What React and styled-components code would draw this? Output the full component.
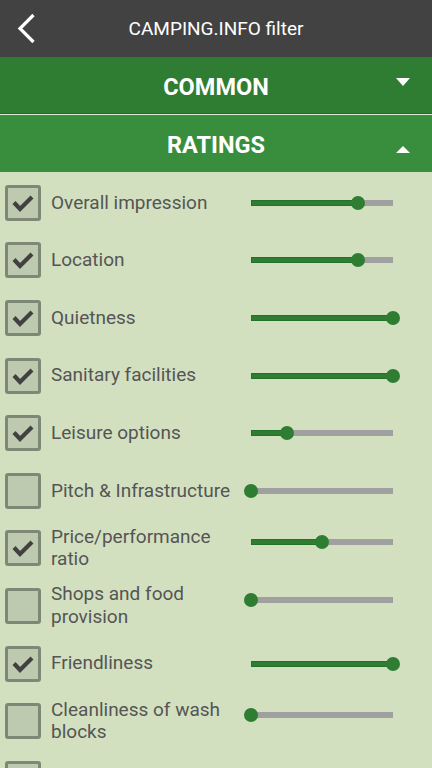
import React from "react";
import styled, { createGlobalStyle } from "styled-components";

const Global = createGlobalStyle`
  html, body { margin: 0; padding: 0; }
  body {
    width: 432px;
    height: 768px;
    overflow: hidden;
    background: #d2e0c0;
    font-family: Roboto, "Noto Sans", "Liberation Sans", sans-serif;
  }
`;

const Screen = styled.div`
  width: 432px;
  height: 768px;
  display: flex;
  flex-direction: column;
  background: #d2e0c0;
  overflow: hidden;
`;

const TopBar = styled.header`
  height: 57px;
  flex: none;
  background: #424242;
  display: grid;
  grid-template-columns: 57px 1fr 57px;
  align-items: center;
`;

const BackButton = styled.button`
  border: 0;
  background: transparent;
  padding: 0 0 0 16px;
  height: 57px;
  display: flex;
  align-items: center;
`;

const Title = styled.h1`
  margin: 0;
  color: #ffffff;
  font-size: 19px;
  font-weight: 400;
  text-align: center;
`;

const Section = styled.div`
  height: ${(p) => p.$h}px;
  flex: none;
  background: ${(p) => p.$bg};
  border-bottom: ${(p) => (p.$divider ? "1px solid #1f6a24" : "none")};
  box-shadow: ${(p) => (p.$divider ? "0 1px 0 #d8ead8" : "none")};
  margin-bottom: ${(p) => (p.$divider ? "1px" : "0")};
  display: grid;
  grid-template-columns: 60px 1fr 60px;
  align-items: center;
`;

const SectionTitle = styled.span`
  grid-column: 2;
  text-align: center;
  color: #ffffff;
  font-size: 23.5px;
  font-weight: 700;
  padding-top: ${(p) => p.$pt}px;
`;

const Caret = styled.span`
  grid-column: 3;
  justify-self: start;
  margin-left: 24px;
  width: 0;
  height: 0;
  border-left: 7px solid transparent;
  border-right: 7px solid transparent;
  ${(p) =>
    p.$up
      ? "border-bottom: 7px solid #fff; margin-top: 11px;"
      : "border-top: 8px solid #fff; margin-top: -7px;"}
`;

const List = styled.div`
  padding-top: 2px;
  display: flex;
  flex-direction: column;
`;

const Row = styled.div`
  height: 57.6px;
  flex: none;
  display: flex;
  align-items: center;
  padding: 0 32px 0 5px;
  box-sizing: border-box;
`;

const Box = styled.div`
  width: 36px;
  height: 36px;
  flex: none;
  box-sizing: border-box;
  border: 3px solid #7e8876;
  border-radius: 3px;
  background: #bdcab0;
  display: flex;
  align-items: center;
  justify-content: center;
`;

const Label = styled.div`
  flex: 1;
  margin-left: 10px;
  color: #555555;
  font-size: 19px;
  line-height: 22.5px;
`;

const SliderWrap = styled.div`
  width: 156px;
  height: 14px;
  flex: none;
  position: relative;
  margin-bottom: ${(p) => (p.$twoLine ? "12px" : "0")};
`;

const Track = styled.div`
  position: absolute;
  left: 7px;
  right: 7px;
  top: 4px;
  height: 6px;
  background: #a0a0a0;
`;

const Fill = styled.div`
  position: absolute;
  left: 0;
  top: 0;
  bottom: 0;
  background: #2e7d32;
  box-shadow: inset 0 0 0 1px #25712a;
`;

const Thumb = styled.div`
  position: absolute;
  top: 0;
  width: 14px;
  height: 14px;
  border-radius: 50%;
  background: #2e7d32;
`;

const Check = () => (
  <svg width="24" height="20" viewBox="0 0 24 20">
    <path d="M3 9.5 L9 16 L21 4" fill="none" stroke="#414141" strokeWidth="4.2" strokeLinejoin="miter" />
  </svg>
);

const Slider = ({ value, max = 4, twoLine }) => {
  const pct = (value / max) * 100;
  return (
    <SliderWrap $twoLine={twoLine}>
      <Track>
        <Fill style={{ width: `${pct}%` }} />
      </Track>
      <Thumb style={{ left: `${(value / max) * 142}px` }} />
    </SliderWrap>
  );
};

const ratings = [
  { label: "Overall impression", checked: true, value: 3 },
  { label: "Location", checked: true, value: 3 },
  { label: "Quietness", checked: true, value: 4 },
  { label: "Sanitary facilities", checked: true, value: 4 },
  { label: "Leisure options", checked: true, value: 1 },
  { label: "Pitch & Infrastructure", checked: false, value: 0 },
  { label: "Price/performance ratio", checked: true, value: 2, twoLine: true },
  { label: "Shops and food provision", checked: false, value: 0, twoLine: true },
  { label: "Friendliness", checked: true, value: 4 },
  { label: "Cleanliness of wash blocks", checked: false, value: 0, twoLine: true },
  { label: "", checked: false, value: 0 },
];

export default function App() {
  return (
    <Screen>
      <Global />
      <TopBar>
        <BackButton aria-label="Back">
          <svg width="20" height="32" viewBox="0 0 20 32">
            <path d="M17.5 2 L4 15.5 L17.5 29" fill="none" stroke="#ffffff" strokeWidth="3.2" />
          </svg>
        </BackButton>
        <Title>CAMPING.INFO filter</Title>
      </TopBar>
      <Section $bg="#2e7d32" $h={56} $divider>
        <SectionTitle $pt={3}>COMMON</SectionTitle>
        <Caret />
      </Section>
      <Section $bg="#388e3c" $h={57}>
        <SectionTitle $pt={2}>RATINGS</SectionTitle>
        <Caret $up />
      </Section>
      <List>
        {ratings.map((r, i) => (
          <Row key={i}>
            <Box>{r.checked && <Check />}</Box>
            <Label>{r.label}</Label>
            <Slider value={r.value} twoLine={r.twoLine} />
          </Row>
        ))}
      </List>
    </Screen>
  );
}
